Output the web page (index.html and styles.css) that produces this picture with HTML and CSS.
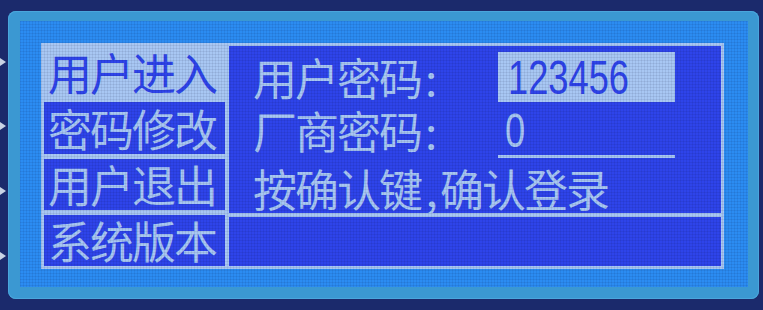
FILE: index.html
```html
<!DOCTYPE html>
<html lang="zh">
<head>
<meta charset="utf-8">
<title>LCD 用户登录</title>
<link rel="stylesheet" href="styles.css">
</head>
<body>
<div class="device">
  <span class="mark m1"></span>
  <span class="mark m2"></span>
  <span class="mark m3"></span>
  <span class="mark m4"></span>
  <div class="bezel">
    <div class="lcd">
      <div class="frame">
        <div class="menu">
          <div class="item active">用户进入</div>
          <div class="item">密码修改</div>
          <div class="item">用户退出</div>
          <div class="item">系统版本</div>
        </div>
        <div class="main">
          <div class="top">
            <div class="row r1">
              <span class="label">用户密码<span class="colon">:</span></span>
              <span class="field filled"><span class="digits">123456</span></span>
            </div>
            <div class="row r2">
              <span class="label">厂商密码<span class="colon">:</span></span>
              <span class="field line"><span class="digits zero">0</span></span>
            </div>
            <div class="row r3">按确认键<span class="comma">,</span>确认登录</div>
          </div>
          <div class="bottom"></div>
        </div>
      </div>
    </div>
  </div>
</div>
</body>
</html>
```

FILE: styles.css
```css
* { box-sizing: border-box; }

html, body {
  margin: 0;
  padding: 0;
}

body {
  width: 763px;
  height: 310px;
  overflow: hidden;
  background: #1b2a6c;
  font-family: "Noto Sans CJK SC", "Noto Sans", sans-serif;
}

.device {
  position: relative;
  width: 763px;
  height: 310px;
  padding: 11px 4px 0 8px;
}

.mark {
  position: absolute;
  left: 0;
  width: 6px;
  height: 8px;
  background: #c9d3e4;
  clip-path: polygon(0 0, 100% 50%, 0 100%);
}
.m1 { top: 58px; }
.m2 { top: 122px; }
.m3 { top: 187px; }
.m4 { top: 252px; }

.bezel {
  width: 751px;
  height: 288px;
  background: #3b98d2;
  border-radius: 8px;
  padding: 10px 11px 12px 12px;
  box-shadow: inset 0 0 0 1px #4aa6dc;
}

.lcd {
  position: relative;
  width: 100%;
  height: 100%;
  background: #2b8cf2;
  padding: 22px 24px 18px 21px;
}

.lcd::after {
  content: "";
  position: absolute;
  inset: 0;
  pointer-events: none;
  background-image:
    linear-gradient(rgba(0, 0, 40, 0.07) 1px, transparent 1px),
    linear-gradient(90deg, rgba(0, 0, 40, 0.07) 1px, transparent 1px);
  background-size: 3px 3px;
}

.frame {
  display: flex;
  gap: 4px;
  width: 100%;
  height: 100%;
  padding: 3px;
  background: #a8c7f3;
}

.menu {
  width: 181px;
  display: flex;
  flex-direction: column;
  gap: 5px;
}

.item {
  flex: 1;
  display: flex;
  align-items: center;
  padding-left: 4px;
  background: #2e44ea;
  color: #a8c7f3;
  font-size: 44px;
  letter-spacing: -2px;
  line-height: 1;
  white-space: nowrap;
}

.item.active {
  background: #a8c7f3;
  color: #2e44ea;
}

.main {
  flex: 1;
  display: flex;
  flex-direction: column;
  gap: 4px;
}

.top {
  height: 167px;
  background: #2e44ea;
  padding-left: 24px;
  color: #a8c7f3;
  font-size: 44px;
  letter-spacing: -2px;
  line-height: 1;
}

.row {
  display: flex;
  align-items: center;
  white-space: nowrap;
}

.r1 { margin-top: 6px; height: 50px; }
.r2 { height: 56px; }
.r3 { height: 55px; padding-top: 4px; }

.label {
  width: 245px;
  display: flex;
  align-items: center;
}

.colon {
  display: inline-block;
  width: 21px;
  padding-left: 4px;
}

.comma {
  display: inline-block;
  width: 19px;
  text-align: center;
}

.field {
  width: 177px;
  display: flex;
  align-items: center;
}

.filled {
  height: 50px;
  background: #a8c7f3;
  color: #2e44ea;
  padding-left: 10px;
}

.line {
  height: 56px;
  border-bottom: 3px solid #a8c7f3;
  padding-left: 7px;
  padding-top: 3px;
}

.digits {
  display: inline-block;
  font-family: "Liberation Sans", Arial, sans-serif;
  font-size: 49px;
  letter-spacing: 0;
  line-height: 1;
  transform: scaleX(0.74);
  transform-origin: left center;
}

.bottom {
  flex: 1;
  background: #2e44ea;
}
```
